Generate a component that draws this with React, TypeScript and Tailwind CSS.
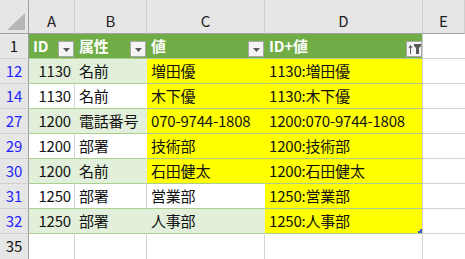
import React from "react";

type Row = { n: number; id: string; attr: string; val: string; cY: boolean; band: boolean };

const rows: Row[] = [
  { n: 12, id: "1130", attr: "名前", val: "増田優", cY: true, band: true },
  { n: 14, id: "1130", attr: "名前", val: "木下優", cY: true, band: false },
  { n: 27, id: "1200", attr: "電話番号", val: "070-9744-1808", cY: true, band: true },
  { n: 29, id: "1200", attr: "部署", val: "技術部", cY: true, band: false },
  { n: 30, id: "1200", attr: "名前", val: "石田健太", cY: true, band: true },
  { n: 31, id: "1250", attr: "部署", val: "営業部", cY: false, band: false },
  { n: 32, id: "1250", attr: "部署", val: "人事部", cY: false, band: true },
];

function Drop() {
  return (
    <div className="w-[16px] h-[16px] bg-[#f4f4f4] border border-[#a8a8a8] flex items-center justify-center">
      <svg width="7" height="4" viewBox="0 0 7 4" className="mt-[2px]">
        <path d="M0 0H7L3.5 4Z" fill="#5a5a5a" />
      </svg>
    </div>
  );
}

function SortFilter() {
  return (
    <div className="w-[16px] h-[16px] bg-[#f4f4f4] border border-[#a8a8a8] relative">
      <svg width="14" height="14" viewBox="0 0 14 14" className="absolute left-0 top-0">
        <path d="M3.5 4V12" stroke="#5a5a5a" strokeWidth="1" />
        <path d="M1.8 6L3.5 3.5L5.2 6" stroke="#5a5a5a" strokeWidth="1" fill="none" />
        <path d="M7 2H14V4L12 6V12H9V6L7 4Z" fill="#5a5a5a" />
      </svg>
    </div>
  );
}

export default function App() {
  const colLetters = ["A", "B", "C", "D", "E"];
  return (
    <div className="w-[465px] h-[259px] overflow-hidden bg-white font-['Noto_Sans_CJK_JP',sans-serif] text-[15px] tracking-[-0.2px] text-[#111]">
      <div className="grid grid-cols-[29px_46px_72px_118px_158px_42px] grid-rows-[34px_repeat(9,25px)]">
        {/* column header row */}
        <div className="bg-[#e6e6e6] border-r border-b border-[#a0a0a0] relative">
          <svg width="18" height="17" viewBox="0 0 18 17" className="absolute right-[3px] bottom-[3px]">
            <path d="M18 0V17H0Z" fill="#b6b6b6" />
          </svg>
        </div>
        {colLetters.map((c) => (
          <div
            key={c}
            className="bg-[#e6e6e6] border-r border-r-[#cfcfcf] border-b border-b-[#a0a0a0] flex items-center justify-center pt-[9px] text-[#222] tracking-normal"
          >
            {c}
          </div>
        ))}

        {/* row 1 - table header */}
        <div className="bg-[#e6e6e6] border-r border-r-[#a0a0a0] border-b border-b-[#d0d0d0] flex items-center justify-center text-[#111] tracking-normal">
          1
        </div>
        <div className="bg-[#70ad47] border-b border-b-[#a9d08e] flex items-center pl-[4px] pr-[1px] font-bold text-white">
          <span>ID</span>
          <div className="ml-auto self-end mb-[1px]">
            <Drop />
          </div>
        </div>
        <div className="bg-[#70ad47] border-b border-b-[#a9d08e] flex items-center pl-[4px] pr-[1px] font-bold text-white">
          <span>属性</span>
          <div className="ml-auto self-end mb-[1px]">
            <Drop />
          </div>
        </div>
        <div className="bg-[#70ad47] border-b border-b-[#a9d08e] flex items-center pl-[4px] pr-[1px] font-bold text-white">
          <span>値</span>
          <div className="ml-auto self-end mb-[1px]">
            <Drop />
          </div>
        </div>
        <div className="bg-[#70ad47] border-b border-b-[#a9d08e] border-r border-r-[#d0d0d0] flex items-center pl-[4px] pr-[0px] font-bold text-white">
          <span>ID+値</span>
          <div className="ml-auto self-end mb-[1px]">
            <SortFilter />
          </div>
        </div>
        <div className="bg-white border-b border-b-[#d4d4d4]" />

        {rows.map((r) => {
          const bg = r.band ? "bg-[#e2efda]" : "bg-white";
          const aRight = r.band ? "border-r-[#e2efda]" : "border-r-[#d4d4d4]";
          const bRight = r.cY ? (r.band ? "border-r-[#e2efda]" : "border-r-white") : r.band ? "border-r-[#e2efda]" : "border-r-[#d4d4d4]";
          const cBg = r.cY ? "bg-[#ffff00]" : bg;
          const cRight = r.cY ? "border-r-[#ffff00]" : r.band ? "border-r-[#e2efda]" : "border-r-white";
          return (
            <React.Fragment key={r.n}>
              <div className="bg-[#e6e6e6] border-r border-r-[#a0a0a0] border-b border-b-[#d0d0d0] flex items-center justify-center text-[#1f1fff] tracking-normal">
                {r.n}
              </div>
              <div className={`${bg} border-r ${aRight} border-b border-b-[#a9d08e] flex items-center justify-end pr-[3px] pt-[1px]`}>
                {r.id}
              </div>
              <div className={`${bg} border-r ${bRight} border-b border-b-[#a9d08e] flex items-center pl-[4px] pt-[1px] whitespace-nowrap`}>
                {r.attr}
              </div>
              <div className={`${cBg} border-r ${cRight} border-b border-b-[#a9d08e] flex items-center pl-[4px] pt-[1px] whitespace-nowrap`}>
                {r.val}
              </div>
              <div className="bg-[#ffff00] border-r border-r-[#d0d0d0] border-b border-b-[#a9d08e] flex items-center pl-[4px] pt-[1px] whitespace-nowrap relative">
                {r.id}:{r.val}
                {r.n === 32 && (
                  <svg width="4" height="4" viewBox="0 0 4 4" className="absolute right-0 bottom-0">
                    <path d="M4 0V4H0V2H2V0Z" fill="#3f5fc4" />
                  </svg>
                )}
              </div>
              <div className="bg-white border-b border-b-[#d4d4d4]" />
            </React.Fragment>
          );
        })}

        {/* row 35 */}
        <div className="bg-[#e6e6e6] border-r border-r-[#a0a0a0] flex items-center justify-center text-[#111] tracking-normal">
          35
        </div>
        <div className="border-r border-r-[#d4d4d4]" />
        <div className="border-r border-r-[#d4d4d4]" />
        <div className="border-r border-r-[#d4d4d4]" />
        <div className="border-r border-r-[#d4d4d4]" />
        <div />
      </div>
    </div>
  );
}
